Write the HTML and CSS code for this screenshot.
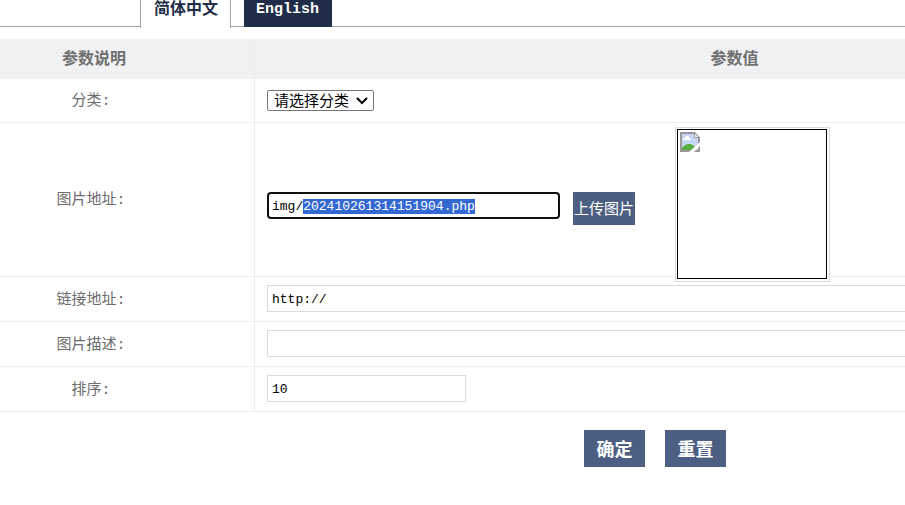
FILE: index.html
```html
<!DOCTYPE html>
<html lang="zh-CN">
<head>
<meta charset="utf-8">
<title>参数设置</title>
<link rel="stylesheet" href="styles.css">
</head>
<body>
<nav class="tabs">
  <a class="tab tab-current" href="#zh">简体中文</a>
  <a class="tab tab-other" href="#en">English</a>
</nav>
<form class="form">
  <table class="params">
    <thead>
      <tr><th class="name">参数说明</th><th class="value">参数值</th></tr>
    </thead>
    <tbody>
      <tr class="row">
        <td class="name"><label for="category">分类<span class="colon">:</span></label></td>
        <td class="value"><div class="select-box">
          <select id="category" class="select"><option>请选择分类</option></select>
          <svg class="arrow" viewBox="0 0 12 8" width="12" height="8" aria-hidden="true"><path d="M1 1 6 6 11 1" fill="none" stroke="#000" stroke-width="2"/></svg>
        </div></td>
      </tr>
      <tr class="row">
        <td class="name"><label for="image">图片地址<span class="colon">:</span></label></td>
        <td class="value value-image"><div class="image-line">
          <div class="image-controls">
            <input id="image" class="field field-image" type="text" value="img/202410261314151904.php" spellcheck="false">
            <button class="upload" type="button">上传图片</button>
          </div>
          <div class="preview"><div class="preview-inner">
            <svg class="broken" viewBox="0 0 20 20" width="20" height="20" aria-hidden="true">
              <path d="M1 1H14L19 6V19H1Z" fill="#c5d7f4"/>
              <path d="M1 19V17C3 14 6 12 9 12C13 12 15 14 17 19Z" fill="#58ad3c"/>
              <path d="M3 8C3 6 4 6 5 6C6 3 9 3 9 6C10 6 11 7 11 8Z" fill="#fff"/>
              <path d="M19 6V19H1V1H14" fill="none" stroke="#999" stroke-width="2"/>
              <path d="M14 0H15L20 5V6H14Z" fill="#999"/>
              <path d="M15 2V5H18Z" fill="#fff"/>
              <path d="M15 0H20V5Z" fill="#fff"/>
              <path d="M20 10V14L14 20H9Z" fill="#fff"/>
            </svg>
          </div></div>
        </div></td>
      </tr>
      <tr class="row">
        <td class="name"><label for="link">链接地址<span class="colon">:</span></label></td>
        <td class="value value-text"><input id="link" class="field field-wide" type="text" value="http://"></td>
      </tr>
      <tr class="row">
        <td class="name"><label for="description">图片描述<span class="colon">:</span></label></td>
        <td class="value value-text"><input id="description" class="field field-wide" type="text"></td>
      </tr>
      <tr class="row">
        <td class="name"><label for="order">排序<span class="colon">:</span></label></td>
        <td class="value value-text"><input id="order" class="field field-short" type="text" value="10"></td>
      </tr>
    </tbody>
  </table>
  <div class="actions">
    <button class="action" type="submit">确定</button>
    <button class="action" type="reset">重置</button>
  </div>
</form>
<script src="main.js"></script>
</body>
</html>
```
FILE: styles.css
```css
* { box-sizing: border-box; }

body {
  margin: 0;
  background: #fff;
  color: #6c6c6c;
  font: 15px/20px "Liberation Mono", "Noto Sans CJK SC", monospace;
}

.tabs {
  display: flex;
  align-items: flex-start;
  gap: 13px;
  height: 27px;
  padding-left: 140px;
  border-bottom: 1px solid #a4a4a6;
}

.tab {
  font-size: 16px;
  line-height: 20px;
  font-weight: bold;
  text-decoration: none;
}

.tab-current {
  height: 28px;
  padding: 0 12px 0 13px;
  border: solid #a4a4a6;
  border-width: 0 1px;
  background: #fff;
  color: #1f2d48;
}

.tab-other {
  height: 27px;
  padding: 0 13px 0 12px;
  background: #1f2d48;
  color: #fff;
  font-size: 15px;
}

.form { overflow: hidden; }

.params {
  width: calc(100% + 309px);
  margin-top: 12px;
  border-collapse: separate;
  border-spacing: 0;
  table-layout: fixed;
}

th {
  height: 40px;
  padding: 2px 0 0;
  background: #eff1f3;
  color: #707070;
  font-size: 16px;
}

td {
  height: 44px;
  padding: 0;
  border-bottom: 1px solid #eee;
}

.name {
  width: 255px;
  padding-right: 66px;
  border-right: 1px solid #eee;
  text-align: center;
}

td.name { padding-top: 3px; }

.colon { padding-right: 6px; }

td.value { padding-left: 12px; }

td.value-text {
  height: 45px;
  padding-bottom: 2px;
}

.select-box {
  position: relative;
  width: 107px;
}

.select {
  display: block;
  width: 100%;
  height: 21px;
  padding: 0 6px 1px;
  border: 1px solid #767676;
  border-radius: 2px;
  appearance: none;
  background: #fff;
  color: #000;
  font: 15px/18px "Noto Sans CJK SC", sans-serif;
}

.arrow {
  position: absolute;
  top: 7px;
  right: 6px;
  pointer-events: none;
}

td.value-image { padding-top: 4px; }

.image-line {
  display: flex;
  align-items: flex-start;
  gap: 40px;
}

.image-controls {
  display: flex;
  align-items: flex-start;
  gap: 13px;
  margin-top: 65px;
}

.field {
  display: block;
  height: 27px;
  padding: 2px 4px 0;
  border: 1px solid #d9d9de;
  background: #fff;
  color: #000;
  font: 13px/20px "Liberation Mono", monospace;
}

.field:focus {
  padding: 1px 3px 0;
  border: 2px solid #101010;
  border-radius: 4px;
  outline: none;
}

.field::selection {
  background: #3367d1;
  color: #fff;
}

.field-image { width: 293px; }
.field-wide { width: 80%; }
.field-short { width: 199px; }

.upload {
  width: 62px;
  height: 33px;
  padding: 0 0 2px;
  border: 0;
  background: #4c5f82;
  color: #fff;
  font: 15px/31px "Noto Sans CJK SC", sans-serif;
}

.preview {
  width: 155px;
  height: 155px;
  margin-bottom: -6px;
  padding: 1px 2px 2px 1px;
  border: 1px solid #ddd;
}

.preview-inner {
  width: 150px;
  height: 150px;
  padding: 2px;
  border: 1px solid #000;
  background: #fff;
}

.broken { display: block; }

.actions {
  display: flex;
  gap: 20px;
  padding: 18px 0 20px 584px;
}

.action {
  width: 61px;
  height: 37px;
  padding: 0;
  border: 0;
  background: #4c5f82;
  color: #fff;
  font: bold 18px/37px "Noto Sans CJK SC", sans-serif;
}
```
FILE: main.js
```js
const image = document.getElementById("image");
image.focus();
image.setSelectionRange(4, image.value.length);
```
